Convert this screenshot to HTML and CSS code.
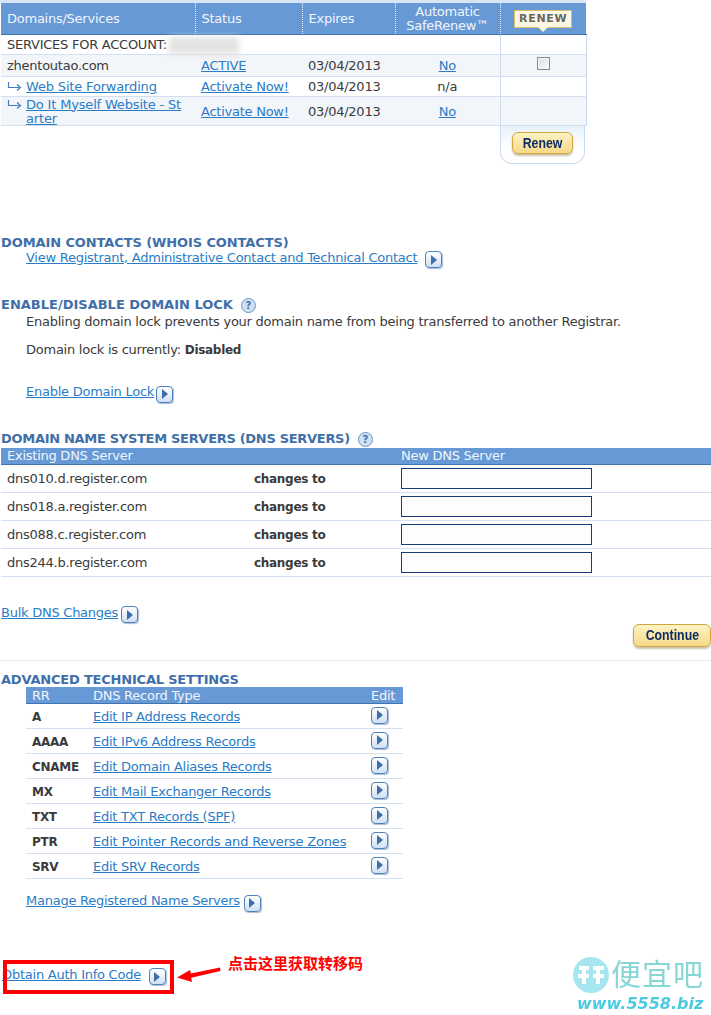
FILE: index.html
```html
<!DOCTYPE html>
<html lang="en">
<head>
<meta charset="utf-8">
<title>Domain details</title>
<link rel="stylesheet" href="styles.css">
</head>
<body>
<main class="page">
  <section class="services">
    <table class="svc">
      <colgroup><col class="c1"><col class="c2"><col class="c3"><col class="c4"><col class="c5"></colgroup>
      <thead>
        <tr>
          <th>Domains/Services</th>
          <th>Status</th>
          <th>Expires</th>
          <th class="ctr two">Automatic<br>SafeRenew™</th>
          <th class="ctr renewhead"><span class="renewtag">RENEW</span></th>
        </tr>
      </thead>
      <tbody>
        <tr class="acct"><td colspan="4">SERVICES FOR ACCOUNT: <span class="blur"></span></td><td class="rn"></td></tr>
        <tr class="alt r22"><td>zhentoutao.com</td><td><a href="#">ACTIVE</a></td><td>03/04/2013</td><td class="ctr"><a href="#">No</a></td><td class="rn ctr"><span class="check"></span></td></tr>
        <tr class="r20"><td class="subcell"><div class="sub"><svg class="elbow" width="16" height="12" viewBox="0 0 16 12"><path d="M1.500 2v5.500H12M10 4.500l3.500 3-3.500 3" fill="none" stroke="#3f7cc0" stroke-width="1.200"/></svg><a href="#" class="wider">Web Site Forwarding</a></div></td><td><a href="#">Activate Now!</a></td><td>03/04/2013</td><td class="ctr">n/a</td><td class="rn"></td></tr>
        <tr class="alt"><td class="subcell"><div class="sub"><svg class="elbow" width="16" height="12" viewBox="0 0 16 12"><path d="M1.500 2v5.500H12M10 4.500l3.500 3-3.500 3" fill="none" stroke="#3f7cc0" stroke-width="1.200"/></svg><a href="#" class="wider">Do It Myself Website - St<br>arter</a></div></td><td><a href="#">Activate Now!</a></td><td>03/04/2013</td><td class="ctr"><a href="#">No</a></td><td class="rn"></td></tr>
      </tbody>
    </table>
    <div class="renewcap"><span class="gold small"><span class="squeeze">Renew</span></span></div>
  </section>

  <section class="contacts">
    <h2>DOMAIN CONTACTS (WHOIS CONTACTS)</h2>
    <p class="ind"><a href="#">View Registrant, Administrative Contact and Technical Contact</a><span class="go gap8"><svg viewBox="0 0 8 10"><path d="M1 0l6 5-6 5z"/></svg></span></p>
  </section>

  <section class="lock">
    <h2 class="wide">ENABLE/DISABLE DOMAIN LOCK<span class="help">?</span></h2>
    <p class="ind lead">Enabling domain lock prevents your domain name from being transferred to another Registrar.</p>
    <p class="ind status">Domain lock is currently: <b>Disabled</b></p>
    <p class="ind enable"><a href="#">Enable Domain Lock</a><span class="go gap2"><svg viewBox="0 0 8 10"><path d="M1 0l6 5-6 5z"/></svg></span></p>
  </section>

  <section class="dns">
    <h2 class="tight">DOMAIN NAME SYSTEM SERVERS (DNS SERVERS)<span class="help">?</span></h2>
    <div class="dnsrow dnshead"><span>Existing DNS Server</span><span></span><span>New DNS Server</span></div>
    <div class="dnsrow"><span class="host">dns010.d.register.com</span><b>changes to</b><span class="field"></span></div>
    <div class="dnsrow"><span class="host">dns018.a.register.com</span><b>changes to</b><span class="field"></span></div>
    <div class="dnsrow"><span class="host">dns088.c.register.com</span><b>changes to</b><span class="field"></span></div>
    <div class="dnsrow"><span class="host">dns244.b.register.com</span><b>changes to</b><span class="field"></span></div>
    <p class="bulk"><a href="#">Bulk DNS Changes</a><span class="go gap3"><svg viewBox="0 0 8 10"><path d="M1 0l6 5-6 5z"/></svg></span></p>
    <div class="contbar"><span class="gold"><span class="squeeze">Continue</span></span></div>
  </section>

  <section class="adv">
    <h2 class="mid">ADVANCED TECHNICAL SETTINGS</h2>
    <div class="rrtable">
      <div class="rrrow rrhead"><span>RR</span><span>DNS Record Type</span><span>Edit</span></div>
      <div class="rrrow"><b>A</b><a href="#">Edit IP Address Records</a><span class="go"><svg viewBox="0 0 8 10"><path d="M1 0l6 5-6 5z"/></svg></span></div>
      <div class="rrrow"><b>AAAA</b><a href="#">Edit IPv6 Address Records</a><span class="go"><svg viewBox="0 0 8 10"><path d="M1 0l6 5-6 5z"/></svg></span></div>
      <div class="rrrow"><b>CNAME</b><a href="#">Edit Domain Aliases Records</a><span class="go"><svg viewBox="0 0 8 10"><path d="M1 0l6 5-6 5z"/></svg></span></div>
      <div class="rrrow"><b>MX</b><a href="#">Edit Mail Exchanger Records</a><span class="go"><svg viewBox="0 0 8 10"><path d="M1 0l6 5-6 5z"/></svg></span></div>
      <div class="rrrow"><b>TXT</b><a href="#">Edit TXT Records (SPF)</a><span class="go"><svg viewBox="0 0 8 10"><path d="M1 0l6 5-6 5z"/></svg></span></div>
      <div class="rrrow"><b>PTR</b><a href="#" class="wider">Edit Pointer Records and Reverse Zones</a><span class="go"><svg viewBox="0 0 8 10"><path d="M1 0l6 5-6 5z"/></svg></span></div>
      <div class="rrrow"><b>SRV</b><a href="#">Edit SRV Records</a><span class="go"><svg viewBox="0 0 8 10"><path d="M1 0l6 5-6 5z"/></svg></span></div>
    </div>
    <p class="ind manage"><a href="#">Manage Registered Name Servers</a><span class="go gap4"><svg viewBox="0 0 8 10"><path d="M1 0l6 5-6 5z"/></svg></span></p>
    <p class="auth"><a href="#">Obtain Auth Info Code</a><span class="go gap8"><svg viewBox="0 0 8 10"><path d="M1 0l6 5-6 5z"/></svg></span></p>
  </section>

  <div class="redbox"></div>
  <svg class="redarrow" width="46" height="20" viewBox="0 0 46 20"><path d="M44 3.500L15 9.500 14 6 1 13.500l15 4.500-.8-4.300L44.500 7z" fill="#f00"/></svg>
  <div class="note">点击这里获取转移码</div>
  <div class="mark">
    <svg class="markdisc" width="38" height="38" viewBox="0 0 38 38"><circle cx="19" cy="19" r="18" fill="#a6e6ef"/><path d="M7 12h10M12 12v16M6 20h11M21 12h11M26 12v16M21 20h11" stroke="#fff" stroke-width="4" fill="none"/></svg>
    <span class="markcn">便宜吧</span>
    <span class="markurl">www.5558.biz</span>
  </div>
</main>
</body>
</html>
```
FILE: styles.css
```css
* { box-sizing: border-box; }
html, body { margin: 0; padding: 0; background: #fff; }
body { font: 13px/16px "DejaVu Sans", Verdana, sans-serif; color: #3a3a3a; letter-spacing: -0.25px; }
.page { position: relative; width: 711px; height: 1015px; overflow: hidden; }
a { color: #2a7cc7; text-decoration: underline; }
a.wider { letter-spacing: -0.17px; }
b { font-size: 12px; letter-spacing: -0.3px; color: #3a3a3a; }
h2, p { margin: 0; }
h2 { font-size: 13px; line-height: 15px; font-weight: bold; color: #3f6fa8; letter-spacing: -0.1px; padding-left: 1px; }
h2.wide { letter-spacing: 0; }
h2.tight { letter-spacing: -0.3px; }
h2.mid { letter-spacing: -0.2px; }
.ind { padding-left: 26px; }

.services { width: 586px; padding: 3px 0 0 1px; background: linear-gradient(#d7e5f6 3px, transparent 3px); }
.svc { width: 585px; table-layout: fixed; border-collapse: collapse; }
.c1 { width: 194px; } .c2 { width: 107px; } .c3 { width: 93px; } .c4 { width: 105px; } .c5 { width: 86px; }
.svc th { background: #6699d6; color: #f2f6fc; font-weight: normal; text-align: left; height: 31px; padding: 2px 6px 0; border-bottom: 1px solid #3f74b0; border-left: 1px dotted #e8f0fa; }
.svc th:first-child { border-left: 0; }
.svc th.two { line-height: 14px; padding: 2px 0 0; }
.svc td { padding: 2px 6px 0; border-bottom: 1px solid #d2e0f2; vertical-align: middle; }
.svc tbody tr { height: 22px; }
.svc tr.acct { height: 20px; }
.svc tr.r20 { height: 20px; }
.svc tbody tr.alt:last-child { height: 28px; }
.svc td.subcell { padding: 0 6px; }
.alt td { background: #f2f5f9; }
.ctr { text-align: center; }
.svc th.ctr { text-align: center; }
.svc td.rn { border-left: 1px solid #c9dcf2; border-right: 1px solid #c9dcf2; background-clip: padding-box; }
.svc th.renewhead { padding: 0; }
.renewtag { position: relative; display: inline-block; width: 58px; height: 18px; margin-top: 1px; background: #fdf8e4; border: 1px solid #dcbe6a; color: #666; font: bold 11px/16px "DejaVu Sans", sans-serif; letter-spacing: .7px; text-align: center; }
.renewtag::after { content: ""; position: absolute; left: 23px; top: 16px; border: 5px solid transparent; border-top-color: #fdf8e4; border-bottom: 0; }
.blur { display: inline-block; width: 70px; height: 18px; margin: -6px 0 -6px -2px; vertical-align: middle; background: #e4e4e4; filter: blur(3px); }
.check { display: inline-block; width: 13px; height: 13px; border: 1px solid #8a8a8a; background: linear-gradient(135deg, #dcdcdc, #fbfbfb); vertical-align: 2px; box-shadow: inset 0 0 0 1px #f4f4f4; }
.sub { display: flex; gap: 3px; padding-top: 1px; margin-bottom: -1px; line-height: 14px; }
.elbow { flex: none; }
.renewcap { width: 85px; height: 38px; margin-left: 499px; border: 1px solid #c9dcf2; border-top: 0; border-radius: 0 0 12px 12px; background: linear-gradient(#e8f1fb, #fff 60%); text-align: center; padding-top: 6px; }
.gold { display: inline-block; height: 22px; border: 1px solid #d0a63e; border-radius: 6px; background: linear-gradient(#fdf3c4, #f6d988); box-shadow: 0 2px 2px #c9c2ad; color: #0f2f63; font: bold 14px/20px "Liberation Sans", Arial, sans-serif; letter-spacing: 0; text-align: center; }
.squeeze { display: inline-block; transform: scaleX(.88); }
.small { width: 61px; }

.go { display: inline-flex; align-items: center; justify-content: center; width: 17px; height: 17px; vertical-align: -3px; margin-top: -2px; border: 1px solid #4f82bd; border-radius: 4px; background: linear-gradient(#fff, #cfe0f3); box-shadow: 1px 1px 1px #a9bcd4; }
.go svg { fill: #3f6fa8; width: 8px; height: 10px; }
.gap8 { margin-left: 8px; }
.gap4 { margin-left: 4px; }
.gap3 { margin-left: 3px; }
.gap2 { margin-left: 2px; }

.contacts { margin-top: 71px; }
.lock { margin-top: 29px; }
.lead { margin-top: 1px; }
.status { margin-top: 12px; }
.enable { margin-top: 26px; }
.help { display: inline-block; width: 15px; height: 15px; margin-left: 8px; border: 1px solid #6c96c8; border-radius: 50%; background: #cfe0f3; color: #3f6fa8; font-size: 10px; line-height: 13px; text-align: center; letter-spacing: 0; }

.dns { margin-top: 28px; }
.dnsrow { display: grid; grid-template-columns: 247px 147px 1fr; align-items: center; height: 28px; padding-left: 6px; margin-left: 1px; border-bottom: 1px solid #d2e0f2; }
.dnsrow .host, .dnsrow b, .rrrow b, .rrrow a { padding-top: 2px; }
.dnshead { height: 17px; margin-top: 1px; background: #6699d6; color: #f2f6fc; border-bottom: 1px solid #3f74b0; line-height: 15px; }
.field { display: block; width: 191px; height: 21px; border: 1px solid #173d78; background: #fdfdfd; }
.bulk { margin-top: 28px; padding-left: 1px; }
.contbar { display: flex; justify-content: flex-end; height: 37px; margin-top: 1px; border-bottom: 1px solid #e2eaf3; }
.contbar .gold { width: 78px; height: 23px; line-height: 21px; }

.adv { margin-top: 11px; }
.rrtable { width: 377px; margin: 0 0 0 26px; }
.rrrow { display: grid; grid-template-columns: 61px 278px 1fr; align-items: center; height: 25px; padding-left: 6px; border-bottom: 1px solid #d2e0f2; }
.rrhead { height: 17px; background: #6699d6; color: #f2f6fc; border-bottom: 1px solid #3f74b0; line-height: 15px; }
.manage { margin-top: 14px; }
.auth { margin-top: 55px; padding-left: 2px; }

.redbox { position: absolute; left: 3px; top: 960px; width: 171px; height: 34px; border: 4px solid #f00; }
.redarrow { position: absolute; left: 176px; top: 964px; }
.note { position: absolute; left: 228px; top: 954px; color: #f00; font: bold 15px/18px "Noto Sans CJK SC", sans-serif; letter-spacing: 0; }
.mark { position: absolute; left: 571px; top: 955px; width: 140px; height: 60px; filter: blur(.6px); }
.markdisc { position: absolute; left: 1px; top: 1px; }
.markcn { position: absolute; left: 40px; top: -1px; color: #86d6d6; font: 30px/36px "Noto Sans CJK SC", sans-serif; letter-spacing: 1px; }
.markurl { position: absolute; left: 6px; top: 40px; color: #4ccbdf; font: italic bold 16px/18px "DejaVu Sans", sans-serif; letter-spacing: 0; white-space: nowrap; }
```
